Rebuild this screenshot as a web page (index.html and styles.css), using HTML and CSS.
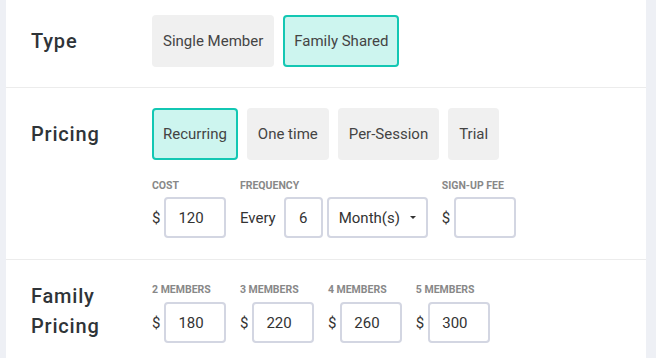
FILE: index.html
```html
<!doctype html>
<html lang="en">
<head>
  <meta charset="utf-8" />
  <title>Membership pricing</title>
  <link rel="stylesheet" href="styles.css">
</head>
<body>
  <div class="panel">

    <section class="row row-type">
      <h3 class="row-label">Type</h3>
      <div class="options">
        <button class="opt">Single Member</button>
        <button class="opt active">Family Shared</button>
      </div>
    </section>

    <section class="row">
      <h3 class="row-label">Pricing</h3>
      <div class="row-body">
        <div class="options">
          <button class="opt active">Recurring</button>
          <button class="opt">One time</button>
          <button class="opt">Per-Session</button>
          <button class="opt">Trial</button>
        </div>

        <div class="fields">
          <div class="field">
            <span class="field-label">Cost</span>
            <div class="field-input">
              <span class="unit">$</span>
              <input class="box" type="text" value="120">
            </div>
          </div>
          <div class="field">
            <span class="field-label">Frequency</span>
            <div class="field-input">
              <span class="every">Every</span>
              <input class="box box-small" type="text" value="6">
              <div class="box select">
                <span>Month(s)</span>
                <span class="caret"></span>
              </div>
            </div>
          </div>
          <div class="field">
            <span class="field-label">Sign-up fee</span>
            <div class="field-input">
              <span class="unit">$</span>
              <input class="box" type="text" value="">
            </div>
          </div>
        </div>
      </div>
    </section>

    <section class="row row-family">
      <h3 class="row-label">Family<br>Pricing</h3>
      <div class="fields">
        <div class="field">
          <span class="field-label">2 Members</span>
          <div class="field-input">
            <span class="unit">$</span>
            <input class="box" type="text" value="180">
          </div>
        </div>
        <div class="field">
          <span class="field-label">3 Members</span>
          <div class="field-input">
            <span class="unit">$</span>
            <input class="box" type="text" value="220">
          </div>
        </div>
        <div class="field">
          <span class="field-label">4 Members</span>
          <div class="field-input">
            <span class="unit">$</span>
            <input class="box" type="text" value="260">
          </div>
        </div>
        <div class="field">
          <span class="field-label">5 Members</span>
          <div class="field-input">
            <span class="unit">$</span>
            <input class="box" type="text" value="300">
          </div>
        </div>
      </div>
    </section>

  </div>
</body>
</html>
```

FILE: styles.css
```css
body {
  margin: 0;
  background: #eef0f5;
  font-family: Roboto, "Liberation Sans", sans-serif;
  color: #333;
}

.panel {
  margin: 0 10px 0 6px;
  min-height: 358px;
  background: #fff;
}

.row {
  display: flex;
  align-items: flex-start;
  padding: 20px 0 21px 25px;
  border-bottom: 1px solid #ececec;
}

.row-type {
  padding-top: 15px;
  padding-bottom: 20px;
}

.row-family {
  padding-top: 24px;
  padding-bottom: 20px;
  border-bottom: none;
}

.row-label {
  flex: none;
  width: 121px;
  margin: 0;
  font-size: 20px;
  font-weight: 500;
  letter-spacing: 0.8px;
  line-height: 52px;
  color: #2f3438;
}

.row-family .row-label {
  margin-top: -3px;
  line-height: 30px;
}

.options {
  display: flex;
  gap: 9px;
}

.opt {
  height: 52px;
  padding: 0 9px;
  border: 2px solid transparent;
  border-radius: 4px;
  background: #f0f0f0;
  font-family: inherit;
  font-size: 15px;
  color: #444;
  cursor: pointer;
}

.opt.active {
  background: #cdf5ef;
  border-color: #13c7b3;
}

.fields {
  display: flex;
  gap: 14px;
}

.row-body .fields {
  margin-top: 20px;
}

.field-label {
  display: block;
  margin-bottom: 5px;
  font-size: 10.5px;
  font-weight: 700;
  line-height: 12px;
  color: #888;
  text-transform: uppercase;
}

.row-family .field-label {
  margin-bottom: 6px;
}

.field-input {
  display: flex;
  align-items: center;
  font-size: 15px;
}

.unit {
  margin-right: 4px;
}

.every {
  margin-right: 8px;
}

.box {
  box-sizing: border-box;
  width: 61.5px;
  height: 41px;
  padding: 0 12px;
  border: 2px solid #d3d6e2;
  border-radius: 4px;
  background: #fff;
  font-family: inherit;
  font-size: 15px;
  color: #333;
  outline: none;
}

.box-small {
  width: 39px;
  padding: 0;
  text-align: center;
}

.select {
  display: flex;
  align-items: center;
  justify-content: space-between;
  width: 101px;
  margin-left: 4px;
  padding: 0 10px;
}

.caret {
  width: 0;
  height: 0;
  border-left: 3px solid transparent;
  border-right: 3px solid transparent;
  border-top: 3px solid #333;
}
```
